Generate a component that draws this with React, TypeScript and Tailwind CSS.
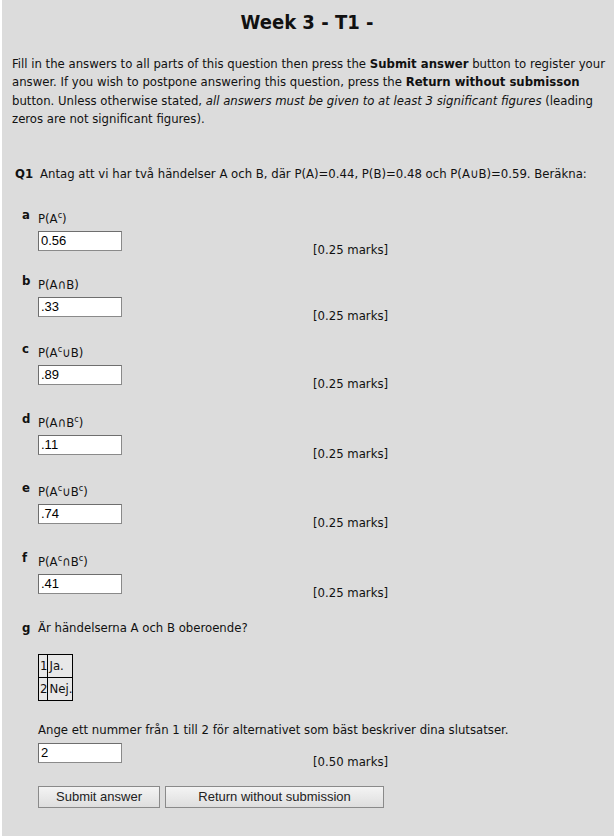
import React from "react";

const body = { fontFamily: '"DejaVu Sans Condensed", "DejaVu Sans", Tahoma, sans-serif' };
const arial = { fontFamily: '"Liberation Sans", Arial, sans-serif' };

function Sup({ children }: { children: React.ReactNode }) {
  return <sup className="text-[9px] relative -top-[5px] align-baseline leading-none">{children}</sup>;
}

type Part = { letter: string; label: React.ReactNode; value: string; mt: string };

const parts: Part[] = [
  { letter: "a", label: <>P(A<Sup>c</Sup>)</>, value: "0.56", mt: "mt-[26px]" },
  { letter: "b", label: <>P(A∩B)</>, value: ".33", mt: "mt-[16px]" },
  { letter: "c", label: <>P(A<Sup>c</Sup>∪B)</>, value: ".89", mt: "mt-[18px]" },
  { letter: "d", label: <>P(A∩B<Sup>c</Sup>)</>, value: ".11", mt: "mt-[20px]" },
  { letter: "e", label: <>P(A<Sup>c</Sup>∪B<Sup>c</Sup>)</>, value: ".74", mt: "mt-[19px]" },
  { letter: "f", label: <>P(A<Sup>c</Sup>∩B<Sup>c</Sup>)</>, value: ".41", mt: "mt-[20px]" },
];

function AnswerRow({ value, marks }: { value: string; marks: string }) {
  return (
    <div className="flex items-start mt-[4px]">
      <input
        readOnly
        value={value}
        style={arial}
        className="w-[84px] h-[20px] bg-white border border-[#8a8a8a] border-t-[#6e6e6e] border-l-[#6e6e6e] px-[2px] text-[13px] text-black outline-none"
      />
      <span className="ml-[191px] mt-[10px] leading-[18px] text-[13px] whitespace-nowrap">{marks}</span>
    </div>
  );
}

export default function App() {
  return (
    <div className="bg-white w-[614px] h-[838px] pl-[2px] pb-[2px]">
      <div className="bg-[#dcdcdc] h-[836px] text-[#111] text-[13px]" style={body}>
        <h1 className="text-center text-[20px] font-bold leading-[24px] pt-[10px] pr-[2px]">Week 3 - T1 -</h1>
        <p className="mt-[21px] pl-[10px] leading-[18.4px] whitespace-nowrap">
          Fill in the answers to all parts of this question then press the <b>Submit answer</b> button to register your
          <br />
          answer. If you wish to postpone answering this question, press the <b>Return without submisson</b>
          <br />
          button. Unless otherwise stated, <i>all answers must be given to at least 3 significant figures</i> (leading
          <br />
          zeros are not significant figures).
        </p>

        <div className="flex mt-[36px] leading-[18px] whitespace-nowrap">
          <span className="w-[38px] pl-[13px] font-bold">Q1</span>
          <span>Antag att vi har två händelser A och B, där P(A)=0.44, P(B)=0.48 och P(A∪B)=0.59. Beräkna:</span>
        </div>

        {parts.map((p) => (
          <div key={p.letter} className={`flex ${p.mt}`}>
            <span className="w-[36px] pl-[20px] font-bold leading-[18px] -mt-[3px]">{p.letter}</span>
            <div>
              <div className="leading-[18px] h-[18px] pt-[1px]">{p.label}</div>
              <AnswerRow value={p.value} marks="[0.25 marks]" />
            </div>
          </div>
        ))}

        <div className="flex mt-[17px]">
          <span className="w-[36px] pl-[20px] font-bold leading-[18px]">g</span>
          <div>
            <div className="leading-[18px]">Är händelserna A och B oberoende?</div>
            <table className="mt-[17px] border-collapse border border-black">
              <tbody>
                <tr className="h-[23px]">
                  <td className="border border-black pl-[1px] pr-0 bg-[#e8e8e8] leading-[18px]">1</td>
                  <td className="border border-black pl-[1px] pr-0 bg-[#e8e8e8] leading-[18px]">Ja.</td>
                </tr>
                <tr className="h-[23px]">
                  <td className="border border-black pl-[1px] pr-0 bg-[#e8e8e8] leading-[18px]">2</td>
                  <td className="border border-black pl-[1px] pr-0 bg-[#e8e8e8] leading-[18px]">Nej.</td>
                </tr>
              </tbody>
            </table>
            <div className="mt-[20px] leading-[18px] whitespace-nowrap">
              Ange ett nummer från 1 till 2 för alternativet som bäst beskriver dina slutsatser.
            </div>
            <AnswerRow value="2" marks="[0.50 marks]" />
            <div className="flex gap-[5px] mt-[15px]" style={arial}>
              <button className="w-[122px] h-[22px] border border-[#8a8a8a] bg-gradient-to-b from-[#f4f4f4] to-[#dedede] text-[13px] text-[#222]">
                Submit answer
              </button>
              <button className="w-[219px] h-[22px] border border-[#8a8a8a] bg-gradient-to-b from-[#f4f4f4] to-[#dedede] text-[13px] text-[#222]">
                Return without submission
              </button>
            </div>
          </div>
        </div>
      </div>
    </div>
  );
}
